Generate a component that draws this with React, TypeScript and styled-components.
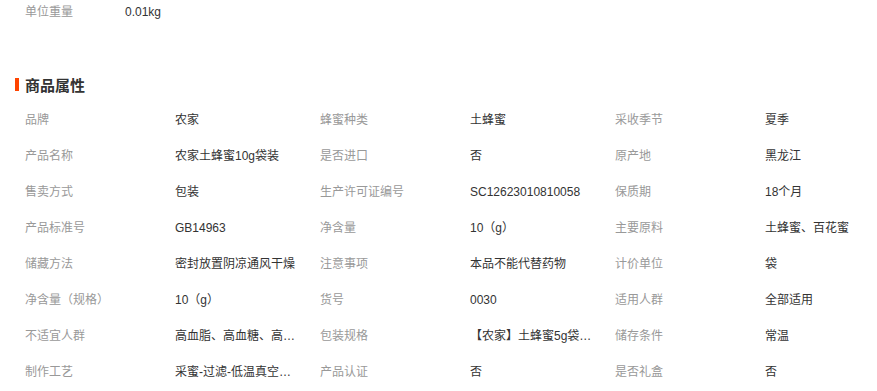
import React from "react";
import styled, { createGlobalStyle } from "styled-components";

const Global = createGlobalStyle`
  html, body { margin: 0; padding: 0; background: #fff; }
  body {
    font-family: "Liberation Sans", "Noto Sans CJK SC", sans-serif;
    font-size: 12px;
    color: #333;
    overflow: hidden;
  }
`;

const Page = styled.div`
  width: 877px;
  height: 391px;
  overflow: hidden;
`;

const TopRow = styled.div`
  display: flex;
  padding-left: 25px;
  height: 24px;
  line-height: 24px;
`;

const TopLabel = styled.span`
  width: 100px;
  color: #999;
`;

const TopValue = styled.span`
  color: #333;
`;

const Heading = styled.h3`
  margin: 48px 0 0 15px;
  display: flex;
  align-items: center;
  height: 24px;
  font-size: 15px;
  font-weight: bold;
  color: #333;
  &::before {
    content: "";
    display: block;
    width: 4px;
    height: 13px;
    background: #ff4400;
    margin-right: 6px;
  }
`;

const Grid = styled.ul`
  list-style: none;
  margin: 6px 0 0;
  padding: 0 0 0 25px;
  display: grid;
  grid-template-columns: repeat(3, 295px);
  grid-auto-rows: 36px;
`;

const Cell = styled.li`
  display: flex;
  align-items: center;
  line-height: 36px;
`;

const Label = styled.span`
  width: 150px;
  flex: none;
  color: #999;
`;

const Value = styled.span`
  max-width: 130px;
  color: #333;
  white-space: nowrap;
`;

const rows: [string, string][] = [
  ["品牌", "农家"],
  ["蜂蜜种类", "土蜂蜜"],
  ["采收季节", "夏季"],
  ["产品名称", "农家土蜂蜜10g袋装"],
  ["是否进口", "否"],
  ["原产地", "黑龙江"],
  ["售卖方式", "包装"],
  ["生产许可证编号", "SC12623010810058"],
  ["保质期", "18个月"],
  ["产品标准号", "GB14963"],
  ["净含量", "10（g）"],
  ["主要原料", "土蜂蜜、百花蜜"],
  ["储藏方法", "密封放置阴凉通风干燥"],
  ["注意事项", "本品不能代替药物"],
  ["计价单位", "袋"],
  ["净含量（规格）", "10（g）"],
  ["货号", "0030"],
  ["适用人群", "全部适用"],
  ["不适宜人群", "高血脂、高血糖、高…"],
  ["包装规格", "【农家】土蜂蜜5g袋…"],
  ["储存条件", "常温"],
  ["制作工艺", "采蜜-过滤-低温真空…"],
  ["产品认证", "否"],
  ["是否礼盒", "否"],
];

export default function App() {
  return (
    <Page>
      <Global />
      <TopRow>
        <TopLabel>单位重量</TopLabel>
        <TopValue>0.01kg</TopValue>
      </TopRow>
      <Heading>商品属性</Heading>
      <Grid>
        {rows.map(([k, v], i) => (
          <Cell key={i}>
            <Label>{k}</Label>
            <Value>{v}</Value>
          </Cell>
        ))}
      </Grid>
    </Page>
  );
}
